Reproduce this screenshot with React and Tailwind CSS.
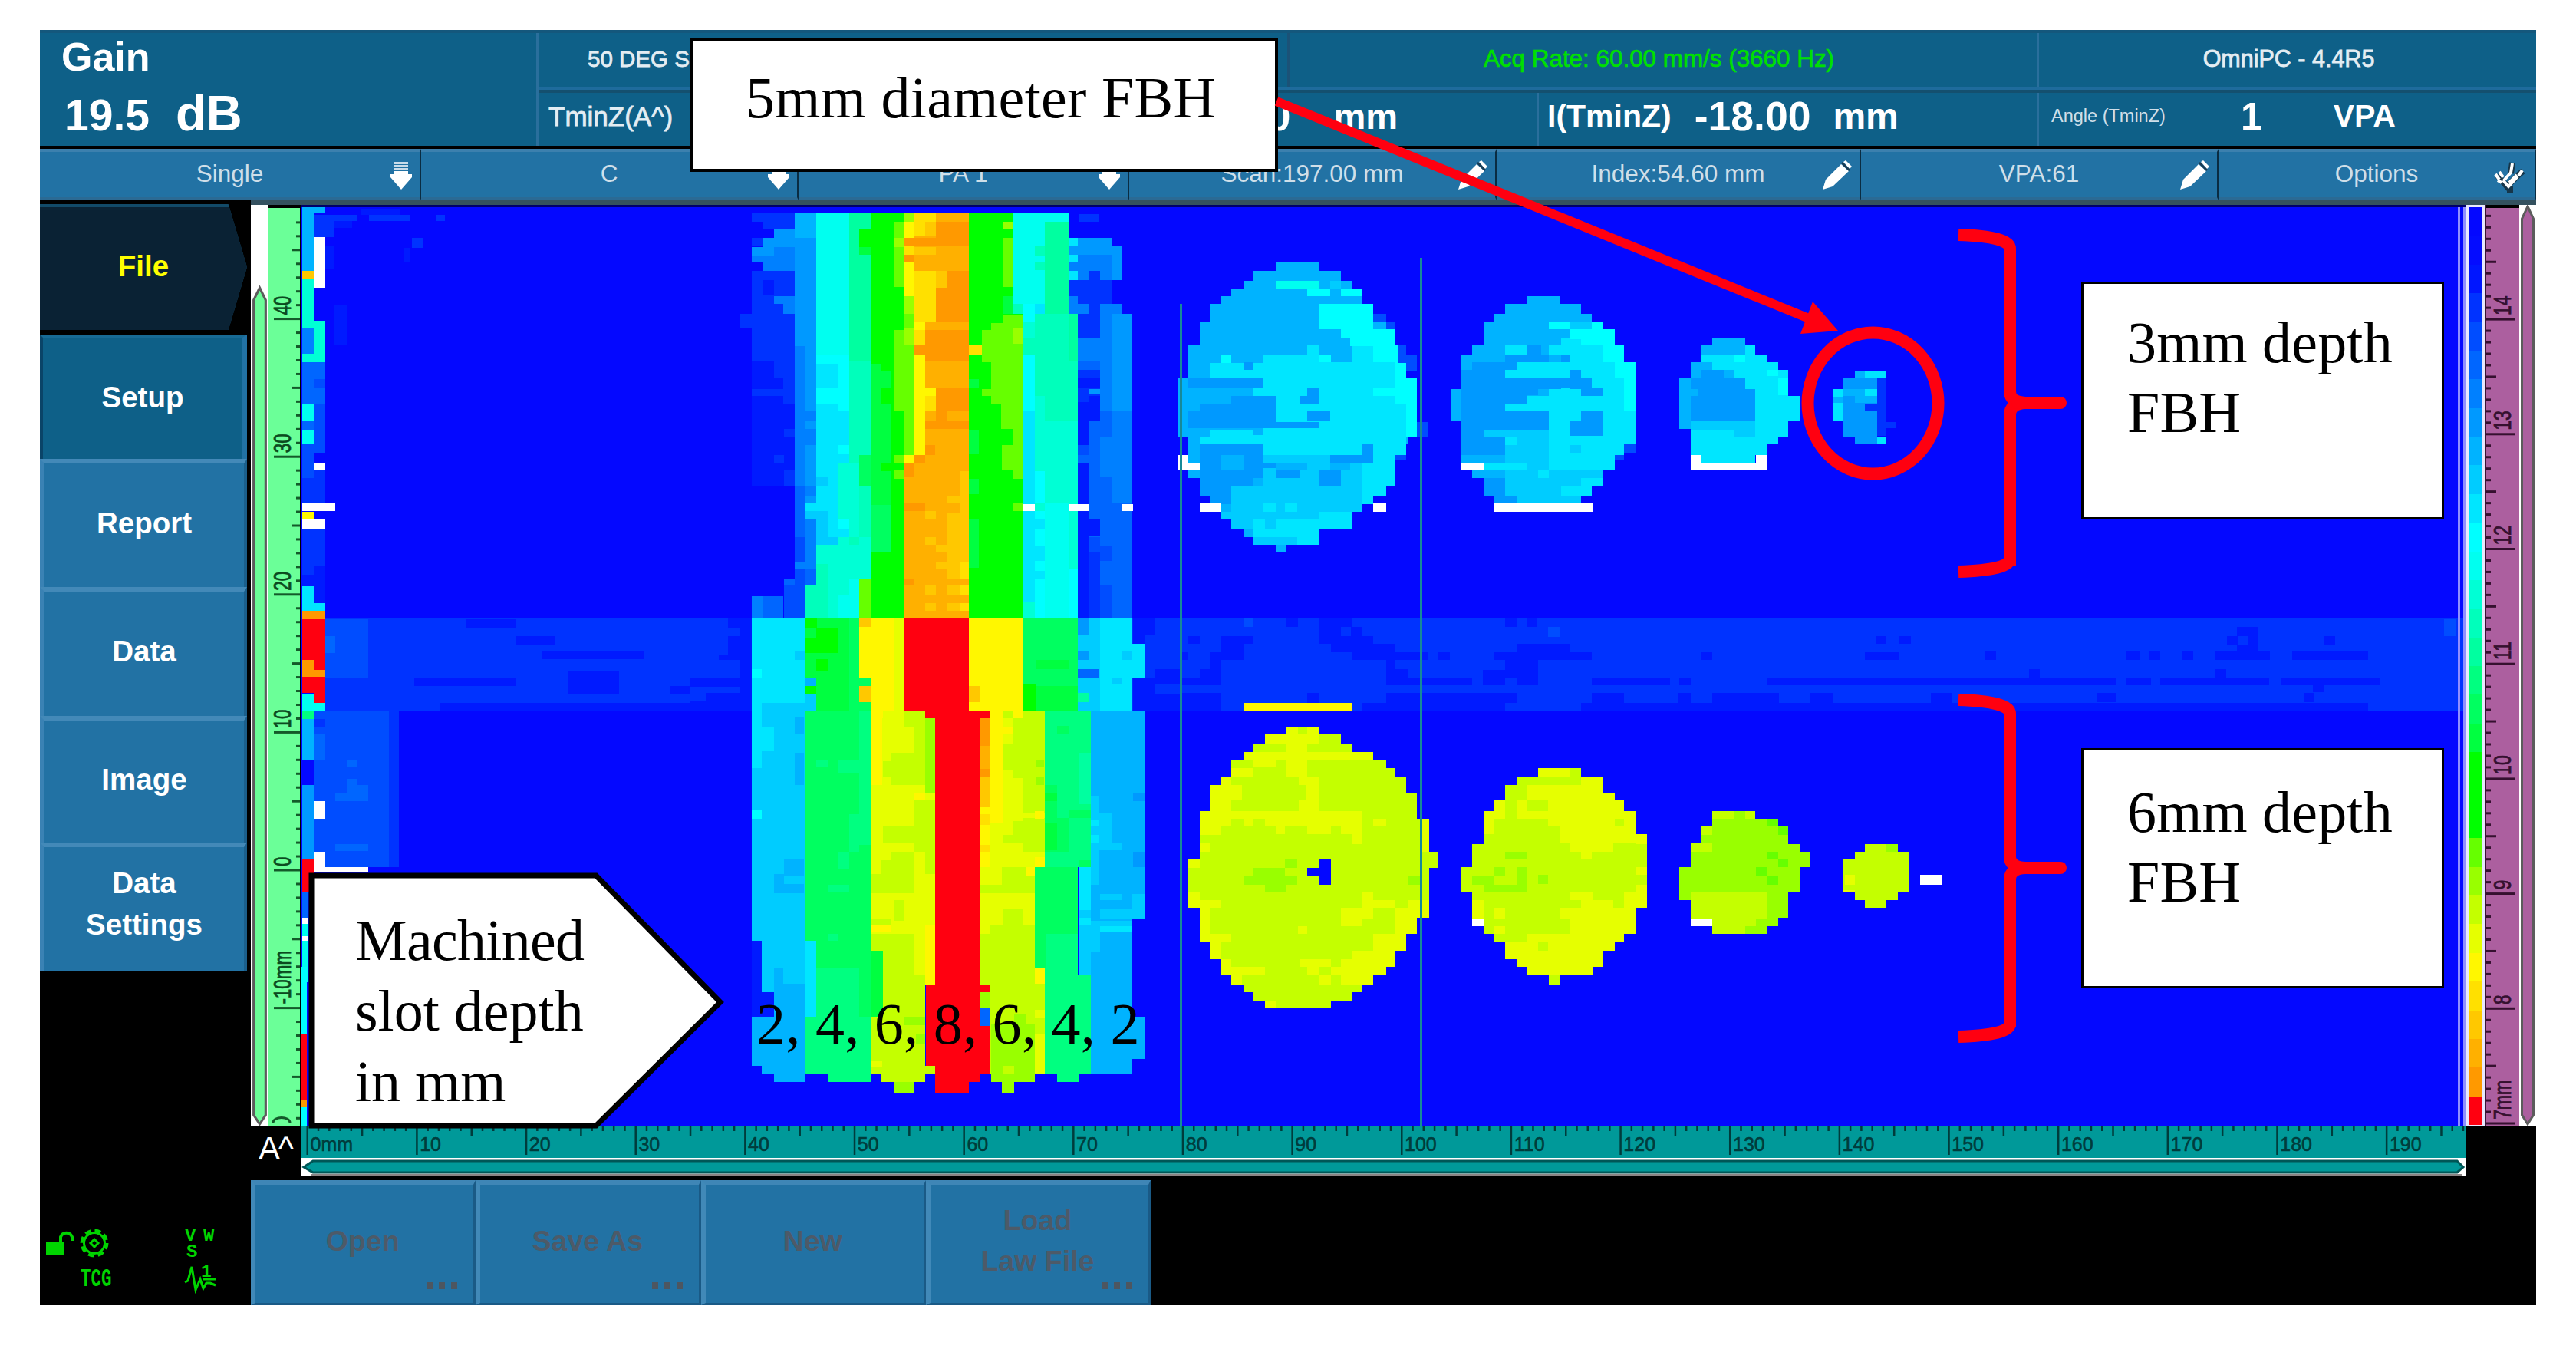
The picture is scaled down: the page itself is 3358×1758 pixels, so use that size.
import clsx from 'clsx';

// depth palette, deepest (top of the colour bar) to shallowest
const PALETTE = [
  '#0408ff', '#040cff', '#0016ff', '#0033ff', '#004dff', '#0066ff', '#0080ff', '#0099ff',
  '#00b3ff', '#00ccff', '#00e6ff', '#00ffff', '#00fff0', '#00ffd5', '#00ffbb', '#00ffa0',
  '#00ff80', '#00ff60', '#00ff40', '#00ff00', '#00ff00', '#00ff00', '#66ff00', '#99ff00',
  '#c4ff00', '#e6ff00', '#fff700', '#ffe000', '#ffc800', '#ffb000', '#ff9900', '#ff0010',
];

const C = {
  B: '#0408ff', b: '#001aff', a: '#0033ff', c: '#004dff', d: '#0066ff', e: '#0080ff',
  f: '#0099ff', g: '#00b3ff', h: '#00ccff', i: '#00e6ff', j: '#00ffff', k: '#00fff0',
  l: '#00ffd5', m: '#00ffbb', n: '#00ffa0', o: '#00ff80', p: '#00ff60', q: '#00ff40',
  r: '#00ff00', s: '#66ff00', t: '#99ff00', u: '#c4ff00', v: '#e6ff00', w: '#fff700',
  x: '#ffe000', y: '#ffc800', z: '#ffb000', A: '#ff9900', R: '#ff0010', W: '#ffffff',
};

// "x0 y0 x1 y1, ..." -> path of rectangles
const rects = (s) =>
  s
    .split(',')
    .map((r) => {
      const [x0, y0, x1, y1] = r.trim().split(' ');
      return `M${x0} ${y0}H${x1}V${y1}H${x0}Z`;
    })
    .join('');

// "y x0 x1, ..., yEnd" -> one rectangle for every scan row
const rows = (s) => {
  const list = s.split(',').map((r) => r.trim().split(' ').map(Number));
  return list
    .slice(0, -1)
    .map(([y, x0, x1], i) => `M${x0} ${y}H${x1}V${list[i + 1][0]}H${x0}Z`)
    .join('');
};

const SLOTS_TOP = [
  ['a', '197 48 333 75, 230 75 333 103, 197 130 230 160, 197 242 333 550, 160 390 197 440'],
  ['b', '197 550 333 975, 230 275 266 325'],
  ['a', '266 550 333 610, 297 610 333 695, 197 645 333 668, 300 780 333 810, 266 870 300 895, 300 920 333 975'],
  ['g', '333 48 401 130'],
  ['f', '266 103 333 130, 230 130 333 162, 197 162 266 190, 333 130 401 975'],
  ['e', '266 162 333 242, 197 190 266 214, 230 214 333 242, 266 328 333 355, 297 355 333 390, 333 500 365 975, 365 720 401 755, 365 780 401 835, 365 975 401 1315'],
  ['d', '333 975 365 1150'],
  ['f', '365 1010 401 1035'],
  ['c', '333 1150 365 1315, 300 1315 365 1427'],
  ['e', '333 1235 365 1260, 197 1350 230 1427'],
  ['d', '300 1290 333 1315, 230 1350 297 1427, 365 1260 401 1315'],
  ['l', '401 720 508 1427'],
  ['k', '401 48 508 530'],
  ['j', '401 530 508 720'],
  ['i', '401 560 470 640, 401 695 470 1175, 401 720 508 895, 440 1090 508 1150, 365 1035 401 1060'],
  ['h', '401 947 440 975, 365 1060 440 1087, 401 1060 440 1175, 440 1150 470 1175'],
  ['j', '470 835 508 865, 470 1087 508 1120'],
  ['n', '508 48 575 550'],
  ['m', '508 550 575 1285'],
  ['l', '470 895 508 1035, 508 900 540 1150, 401 1175 575 1290, 401 1175 540 1427, 540 1150 575 1285'],
  ['m', '401 1240 440 1427, 365 1315 440 1427'],
  ['k', '508 1290 540 1427, 470 1345 540 1427'],
  ['r', '575 48 683 1427, 540 103 575 162'],
  ['q', '540 162 575 187, 575 560 610 1200, 610 585 642 1200'],
  ['p', '540 870 575 975, 575 1040 642 1200'],
  ['r', '610 640 642 695, 610 895 650 925'],
  ['s', '648 75 683 297, 648 445 683 720, 683 390 712 870, 540 1290 575 1427, 652 870 683 895, 652 920 683 950'],
  ['t', '648 130 683 162, 683 440 712 497, 683 330 712 390'],
  ['z', '683 48 712 75, 712 48 889 415, 712 415 889 895, 683 895 889 1427'],
  ['t', '683 48 712 75'],
  ['A', '785 75 889 130, 683 130 889 160, 683 187 712 214, 820 242 889 300, 785 300 889 415'],
  ['x', '712 48 785 75, 712 75 750 125, 683 160 712 187, 712 242 785 415, 712 445 750 497'],
  ['y', '750 75 785 125, 712 162 785 187, 785 242 820 300'],
  ['w', '683 75 712 130, 683 214 712 330, 712 415 750 445, 712 527 750 870, 750 642 785 670, 683 870 712 895'],
  ['A', '750 445 889 550, 712 497 750 527, 785 642 889 720, 785 720 820 755, 750 755 889 780, 750 835 782 870, 712 870 750 895, 683 895 712 947, 683 1035 750 1060, 683 1290 712 1315'],
  ['x', '750 670 785 720'],
  ['y', '860 925 889 1427, 820 1010 860 1035, 750 1060 785 1087, 820 1065 889 1290, 750 1150 785 1175, 785 1175 820 1200, 785 1235 820 1260, 750 1315 785 1345, 820 1315 889 1345, 750 1375 785 1400, 820 1375 889 1400'],
  ['x', '860 1235 889 1290, 860 1315 889 1345, 860 1375 889 1400'],
  ['z', '820 1290 889 1315, 820 1345 889 1375, 860 1400 889 1427'],
  ['r', '889 48 1063 1427'],
  ['k', '1030 48 1133 355, 1133 48 1207 75'],
  ['l', '1063 390 1238 1427'],
  ['t', '1000 75 1030 100'],
  ['s', '1000 130 1030 297, 1000 395 1063 425, 960 420 1063 695, 932 445 960 555, 932 645 960 670, 992 695 1063 780, 1030 780 1063 835, 995 835 1063 920, 1030 920 1063 950, 1030 1035 1063 1060'],
  ['t', '1030 440 1060 490'],
  ['q', '1000 330 1030 390, 889 612 922 640, 889 785 922 865, 889 950 922 1003, 889 1090 922 1255'],
  ['x', '889 497 930 527'],
  ['n', '1133 75 1207 390, 1207 390 1238 550'],
  ['m', '1100 160 1133 190, 1100 214 1133 240, 1030 355 1063 390, 1100 390 1207 670, 1063 470 1100 530, 1133 670 1207 755, 1207 550 1238 755'],
  ['j', '1063 355 1133 390, 1063 390 1100 415, 1063 530 1100 720, 1100 925 1133 1035, 1100 1060 1207 1427, 1207 1260 1238 1427'],
  ['i', '1063 720 1100 1370, 1100 355 1133 390, 1100 1090 1133 1120, 1100 1180 1133 1230, 1100 1265 1133 1290'],
  ['k', '1133 1035 1207 1427'],
  ['e', '1238 160 1377 242, 1207 214 1238 242, 1238 242 1275 275, 1308 242 1345 275'],
  ['f', '1238 130 1345 187, 1345 160 1377 275, 1207 160 1238 187'],
  ['i', '1207 130 1238 160, 1207 187 1238 214, 1207 242 1238 275'],
  ['a', '1275 242 1308 275, 1207 275 1345 355, 1275 325 1308 390, 1238 390 1308 470, 1242 50 1305 75, 1238 580 1308 755'],
  ['e', '1207 330 1238 390, 1238 355 1275 390, 1308 355 1345 500, 1345 355 1377 390, 1238 470 1308 550, 1308 500 1345 720, 1345 720 1412 1035'],
  ['f', '1345 390 1412 720, 1275 645 1308 665'],
  ['d', '1238 550 1308 580, 1308 720 1345 755, 1275 755 1345 1150, 1238 870 1275 895, 1308 1035 1412 1427'],
  ['e', '1308 810 1345 945'],
  ['b', '1275 605 1308 640, 1238 610 1275 640, 1275 670 1308 755, 1238 690 1275 755, 1238 755 1275 835, 1238 895 1275 1427, 1275 1090 1308 1145'],
  ['c', '1238 835 1275 870, 1275 1150 1308 1427, 1308 1180 1345 1230, 1308 1315 1345 1427'],
  ['a', '1275 1200 1308 1427'],
  ['W', '1063 1037 1100 1060, 1210 1037 1275 1060, 1377 1037 1414 1060'],
];

const SLOTS_BOTTOM = [
  ['b', '0 58 197 328, 1414 58 1568 328'],
  ['a', '0 58 120 165, 120 87 157 110, 0 165 90 180, 90 180 157 230, 0 180 90 230, 0 258 157 275, 0 275 48 300, 1484 58 1568 205, 1450 105 1484 230, 1484 252 1568 278'],
  ['i', '197 58 365 328'],
  ['j', '197 205 228 230'],
  ['h', '333 155 365 180, 365 278 401 328'],
  ['q', '401 58 508 328, 365 87 401 232'],
  ['r', '365 58 405 87, 401 85 473 160, 365 115 473 160, 401 178 441 212, 365 255 401 278'],
  ['g', '365 232 401 255'],
  ['p', '508 58 540 328'],
  ['w', '540 58 683 303, 577 303 683 328, 889 58 1063 350'],
  ['v', '650 58 683 328'],
  ['y', '540 58 577 82, 540 255 577 303, 889 255 925 303'],
  ['p', '540 230 577 255, 540 303 577 328, 1063 58 1238 328'],
  ['R', '683 58 889 328'],
  ['r', '1063 252 1103 328'],
  ['q', '1103 180 1207 205, 1103 255 1238 328'],
  ['h', '1238 58 1308 328'],
  ['i', '1308 58 1412 328, 1412 133 1450 230'],
  ['f', '1238 58 1275 105, 1238 155 1275 180'],
  ['d', '1238 207 1305 232'],
  ['n', '1238 275 1275 303'],
  ['h', '1377 155 1412 180, 1345 232 1377 252, 197 328 365 1000, 228 1000 365 1150'],
  ['i', '197 305 228 495, 228 375 266 445'],
  ['h', '228 305 365 375'],
  ['g', '333 345 363 395, 333 450 363 545, 300 762 363 805, 266 805 363 860, 266 1080 297 1150, 297 1125 365 1220, 266 1150 365 1220, 197 1220 365 1365, 228 1365 365 1390, 266 1390 365 1412'],
  ['h', '300 810 363 833'],
  ['j', '197 618 228 643'],
  ['b', '197 1000 228 1220, 228 1150 266 1220'],
  ['p', '365 328 578 1100'],
  ['i', '365 1000 401 1220'],
  ['o', '540 328 578 720, 470 470 540 510, 508 630 540 740, 470 740 508 790, 401 470 441 492, 441 835 508 857, 441 978 470 1000, 401 1080 540 1390, 365 1220 578 1390, 441 1390 578 1412'],
  ['p', '540 1080 578 1220'],
  ['v', '578 328 782 1028'],
  ['w', '578 305 615 350'],
  ['u', '683 330 750 375, 642 450 750 545, 615 475 750 520, 713 375 750 450, 750 350 782 540, 713 590 782 740, 615 665 782 715, 642 740 713 860, 750 740 782 805, 610 765 713 825, 578 805 642 860, 650 880 683 940, 578 935 642 955, 610 1028 750 1412, 578 980 713 1028, 578 1220 750 1390, 750 1365 782 1390'],
  ['t', '750 350 782 570, 683 1220 750 1245, 720 1270 750 1300, 648 1412 713 1442'],
  ['q', '578 1028 615 1220'],
  ['v', '713 955 750 1100, 578 1350 612 1368'],
  ['w', '750 805 782 1127, 713 570 750 590, 578 328 612 545, 578 955 642 975'],
  ['v', '750 805 782 955'],
  ['R', '782 328 927 1412, 750 328 957 350, 752 1127 957 1150, 752 1150 927 1365, 927 1247 957 1390, 782 1412 889 1442'],
  ['v', '957 350 1133 785, 927 660 957 785, 927 785 1100 980'],
  ['w', '957 328 1000 655, 1000 375 1030 395, 927 522 957 740, 927 740 957 785'],
  ['u', '1000 328 1030 350, 1063 328 1133 575, 1030 350 1133 525, 1000 425 1063 500, 1063 575 1133 625, 1063 640 1133 740, 1000 690 1133 715, 1030 650 1065 690, 995 785 1100 860, 1000 905 1063 960, 957 955 1100 980, 927 980 1100 1127, 957 1078 1133 1390, 927 835 1000 860'],
  ['A', '927 350 957 430, 927 497 957 522'],
  ['z', '927 430 957 497'],
  ['y', '927 522 957 610'],
  ['x', '927 630 957 660, 927 720 957 740'],
  ['w', '1100 620 1130 642, 1100 755 1133 785, 1100 1078 1133 1125, 1070 785 1100 810'],
  ['t', '1103 470 1130 492, 1103 522 1130 545, 960 1240 1100 1390, 960 1390 1100 1412, 1035 1215 1070 1240, 995 1412 1035 1442, 927 1150 957 1195'],
  ['v', '1100 1200 1133 1225, 1100 1270 1133 1390'],
  ['u', '1000 1365 1035 1390'],
  ['d', '927 1195 957 1247'],
  ['o', '1133 328 1278 785, 1133 980 1238 1390, 1238 1100 1278 1390, 1170 1390 1240 1412'],
  ['n', '1240 450 1278 600'],
  ['p', '1170 372 1207 395, 1133 545 1170 740, 1133 640 1207 740, 1207 618 1278 640, 1100 785 1238 980, 1240 765 1278 785, 1100 980 1135 1078'],
  ['q', '1133 567 1170 592, 1133 655 1170 735'],
  ['i', '1240 785 1278 960'],
  ['g', '1278 328 1450 935, 1278 930 1412 1390, 1278 1220 1450 1345'],
  ['h', '1240 910 1278 1100, 1278 575 1305 700, 1305 625 1345 735, 1278 685 1305 810, 1305 715 1377 735, 1278 785 1305 835, 1308 862 1377 880, 1308 905 1450 935, 1412 862 1450 935, 1278 940 1412 975, 1278 975 1308 1030'],
  ['i', '1278 645 1305 665, 1278 690 1305 712, 1240 932 1278 955, 1308 957 1412 975'],
  ['f', '1414 740 1450 785, 1414 567 1450 592'],
];

const BAND_MID = [
  ['b', '252 107 274 140, 313 107 375 208, 353 140 392 208, 375 178 414 208, 335 208 455 240, 375 240 515 270, 0 140 8 180, 69 178 91 208, 131 178 190 208, 131 208 172 240, 110 240 172 270, 0 240 69 270, 0 270 8 370, 0 307 30 370, 30 338 110 370, 91 307 131 370, 110 270 131 370, 437 270 455 340, 437 307 478 370, 437 340 597 370, 0 370 8 398, 535 240 556 270, 637 240 820 270, 680 208 778 240, 658 270 720 310, 617 310 720 340, 617 340 658 370, 680 340 720 370, 658 107 680 140, 698 107 718 140, 820 340 965 370, 982 340 1004 370, 1145 340 1568 370, 1022 240 1043 270, 1327 240 1390 270, 1348 178 1367 208, 1390 178 1412 208, 1553 240 1568 270, 0 398 131 467, 291 398 313 437, 392 437 658 467, 437 398 680 437, 820 398 880 437, 800 437 1568 467, 980 398 1004 437, 1043 398 1168 437, 1225 398 1268 437, 1450 398 1490 437'],
  ['a', '353 140 372 178'],
  ['c', '172 107 190 140, 738 140 760 180'],
  ['w', '172 437 375 470'],
];

const BAND_RIGHT = [
  ['b', '0 1527 440 1550, 467 1527 530 1550, 555 1527 840 1550, 872 1527 1130 1550, 467 1443 500 1470, 527 1443 555 1470, 612 1443 642 1470, 700 1443 843 1470, 900 1443 1100 1470, 755 1365 810 1443, 730 1393 755 1420, 985 1393 1013 1420, 212 1500 240 1527, 700 1500 728 1527, 97 1443 125 1470, 955 1550 985 1572, 387 1574 440 1605, 930 1574 957 1605, 0 1607 1100 1632'],
  ['a', '757 1395 783 1420'],
  ['c', '1298 1340 1330 1393'],
];

const EDGE_TOP = [
  ['a', '643 750 740 775, 643 775 690 838, 768 750 862 775, 920 750 940 775, 865 840 890 880'],
  ['b', '690 775 730 800, 669 870 690 960, 690 1100 718 1260, 750 725 840 750, 848 880 862 935'],
  ['g', '617 717 643 968, 643 717 669 745'],
  ['W', '643 838 669 1035'],
  ['y', '617 968 643 1003'],
  ['l', '617 1003 643 1200, 643 1165 669 1262'],
  ['e', '617 1200 643 1262'],
];

const EDGE_LOW = [
  ['a', '1152 705 3600 925'],
  ['c', '1152 705 1320 845, 1107 925 1320 1295, 1320 925 1400 1295'],
  ['b', '1700 705 1900 725, 2000 780 2400 800, 1900 745 2050 765, 2100 830 2300 885, 2600 760 2700 800, 1500 845 1900 865, 2500 865 3500 885, 1600 905 2700 925, 2750 740 2850 790'],
  ['a', '1160 845 1235 925, 1235 880 1400 905, 1400 925 1440 1295, 1107 942 1152 960'],
  ['d', '1152 745 1190 785, 1235 1040 1275 1058, 1235 1085 1275 1120, 1275 1100 1320 1120, 1190 1120 1320 1137, 1190 1240 1320 1257'],
  ['l', '1062 0 1152 95'],
  ['e', '1062 15 1107 75'],
  ['d', '1062 95 1152 195, 1062 195 1107 330'],
  ['c', '1107 135 1152 155, 1107 195 1152 310, 1062 290 1107 370'],
  ['k', '1062 195 1107 235, 1062 255 1107 290'],
  ['a', '1107 350 1152 430, 1062 370 1107 430, 1062 490 1107 600, 1107 490 1152 580'],
  ['b', '1107 580 1152 668, 1062 600 1107 627'],
  ['W', '1107 333 1152 350, 1062 430 1192 448, 1062 468 1152 490'],
  ['w', '1062 450 1107 468'],
  ['i', '1062 627 1107 685, 1107 668 1152 685'],
  ['A', '1062 685 1152 705'],
  ['R', '1062 705 1152 880, 1107 880 1152 905'],
  ['A', '1062 803 1107 843, 1107 825 1152 843'],
  ['k', '1062 882 1107 922, 1107 905 1152 922'],
  ['o', '1062 922 1107 942'],
  ['g', '1062 942 1107 1040'],
  ['B', '1062 1040 1107 1100'],
  ['f', '1062 1100 1107 1275'],
  ['d', '1107 978 1152 1040'],
  ['W', '1107 1137 1152 1180, 1107 1258 1152 1300, 1107 1295 1320 1307'],
  ['R', '1062 1275 1107 1355'],
  ['d', '1062 1355 1085 1415'],
  ['W', '1062 1415 1085 1430, 1062 1458 1085 1470'],
  ['k', '1062 1430 1085 1458, 1062 1470 1085 1568'],
];

const EDGE_BOTTOM = [
  ['j', '615 0 628 262'],
  ['R', '615 262 628 520'],
  ['A', '615 520 628 550'],
  ['j', '615 550 628 620'],
];

const HOLES_3MM = [
  {
    fill: 'g',
    shape:
      '247 233 313, 278 190 353, 317 172 373, 347 150 392, 378 131 392, 408 110 414, 478 91 437, 508 91 455, 570 69 459, 637 69 475, 700 50 495, 928 69 478, 958 69 475, 998 69 455, 1088 91 455, 1120 91 437, 1157 110 414, 1190 131 392, 1220 131 375, 1250 150 375, 1288 172 313, 1320 190 313, 1350 233 252, 1380',
    cells: [
      ['i', '210 607 455 1000, 110 640 210 700, 370 540 455 640, 455 637 475 1000, 475 700 495 928, 291 570 313 607, 190 738 233 768, 110 900 210 958, 91 928 110 958, 392 1000 455 1120, 392 1120 437 1157, 375 1157 414 1190'],
      ['g', '353 570 373 635, 335 607 373 637'],
      ['j', '313 408 414 508, 353 508 455 540, 370 540 455 572, 414 570 459 637, 455 637 475 800, 414 738 478 768, 475 700 495 928, 353 347 392 378, 291 347 333 378, 131 607 150 640, 313 607 335 637'],
      ['k', '233 317 313 347'],
      ['h', '333 317 353 347, 210 1000 333 1120, 210 1000 392 1120, 150 1120 392 1220, 131 1220 375 1250, 150 1250 210 1288, 172 640 190 665'],
      ['f', '69 700 210 738, 150 768 233 800, 91 800 233 828, 60 828 233 895, 110 870 313 895, 276 768 313 798, 291 738 313 768, 291 828 333 865, 172 637 190 665, 91 958 210 1090, 91 1060 190 1120, 110 1120 150 1190, 91 1088 150 1157, 333 1000 414 1030, 392 958 414 1000, 233 1060 276 1090, 313 1060 353 1120, 210 1030 233 1050'],
      ['g', '50 700 69 928, 131 1000 172 1060, 333 1030 370 1060, 69 1000 91 1090, 233 1030 291 1060, 190 900 210 920'],
      ['i', '190 1250 375 1288, 190 1288 313 1350, 313 1220 375 1288, 210 1187 233 1220, 250 1187 272 1220'],
      ['h', '190 1320 272 1350, 212 1250 233 1288'],
      ['c', '414 447 437 478, 437 478 455 508, 459 570 475 640, 475 607 495 668, 495 870 515 930, 455 998 475 1020'],
      ['W', '50 998 69 1058, 50 1030 91 1058, 91 1187 131 1220, 414 1187 437 1220'],
    ],
  },
  {
    fill: 'g',
    shape:
      '378 698 760, 408 658 800, 447 637 820, 478 620 840, 508 620 862, 570 597 880, 607 578 880, 637 578 902, 740 557 902, 865 578 902, 958 578 880, 998 578 862, 1030 597 862, 1060 597 840, 1088 620 840, 1120 620 820, 1157 637 800, 1190',
    cells: [
      ['i', '740 637 902 958, 778 508 862 607, 762 540 800 607, 740 570 862 607, 778 607 880 637, 658 570 698 607, 620 930 880 1000, 658 1000 862 1060, 800 1060 840 1120'],
      ['j', '740 478 778 508, 820 478 840 508, 778 508 862 545, 800 545 862 570, 840 570 880 637, 862 637 902 700, 880 700 902 828'],
      ['h', '778 478 820 508, 620 900 740 930, 658 960 740 1060, 658 1060 840 1090, 658 1090 800 1157, 680 1157 800 1190, 778 960 800 990'],
      ['f', '698 570 725 607, 658 607 740 637, 597 637 680 700, 578 665 658 700, 578 700 820 740, 578 740 658 1000, 658 740 720 765, 658 765 698 800, 800 738 840 768, 780 665 800 700, 600 865 740 900, 620 828 740 895, 778 865 840 925, 800 828 840 865, 762 607 778 637, 578 1000 620 1015, 620 1088 658 1157, 637 1157 680 1190'],
      ['i', '680 637 800 665, 658 665 780 700, 698 768 800 800, 658 798 840 828, 762 738 778 768, 740 828 778 960, 620 1030 700 1060, 762 1120 820 1157, 720 1060 740 1088'],
      ['h', '620 900 658 930, 680 900 740 960, 640 930 680 930'],
      ['g', '578 1000 620 1030, 557 740 578 865, 720 740 740 760'],
      ['c', '880 958 902 990, 862 998 880 1020'],
      ['W', '578 1030 620 1058, 637 1187 822 1220'],
    ],
  },
  {
    fill: 'i',
    shape:
      '540 1043 1105, 570 1022 1123, 607 1022 1145, 637 1004 1166, 665 1004 1185, 700 982 1185, 768 982 1206, 865 982 1185, 898 1004 1185, 928 1004 1166, 958 1004 1145, 1000 1022 1123, 1030',
    cells: [
      ['g', '1043 540 1105 570, 1022 570 1105 607, 982 700 1004 898, 1004 637 1043 700'],
      ['f', '1004 700 1105 865, 1105 740 1123 865, 1022 665 1065 700'],
      ['g', '1065 665 1085 700, 1004 740 1018 768'],
      ['h', '1004 865 1123 900, 1085 900 1123 928'],
      ['j', '1085 607 1105 637, 1145 665 1166 690, 1166 700 1185 765'],
      ['W', '1004 1000 1022 1058, 1004 1030 1145 1058, 1125 1000 1145 1058'],
    ],
  },
  {
    fill: 'f',
    shape: '668 1308 1350, 700 1287 1350, 928 1308 1350, 958',
    cells: [
      ['i', '1327 668 1367 700, 1269 740 1287 865, 1327 740 1350 768, 1350 928 1367 958'],
      ['g', '1308 668 1327 700, 1287 740 1327 768, 1308 768 1350 795, 1269 770 1287 795'],
      ['a', '1350 700 1367 925, 1327 798 1350 828, 1367 870 1385 895'],
    ],
  },
];

const HOLES_6MM = [
  {
    fill: 'u',
    shape:
      '200 252 313, 232 212 353, 270 190 373, 300 172 414, 330 150 437, 362 150 455, 398 131 475, 430 110 475, 460 110 495, 530 91 495, 560 91 517, 690 91 535, 720 69 535, 752 69 517, 910 91 517, 947 91 495, 1010 91 475, 1040 110 475, 1078 110 455, 1110 131 455, 1140 131 437, 1170 150 414, 1210 172 392, 1240 190 373, 1272 212 335, 1302',
    cells: [
      ['v', '212 232 313 270, 252 200 291 398, 291 200 313 232, 172 300 414 330, 190 330 233 360, 150 362 190 398, 131 398 150 430, 110 430 170 490, 110 490 150 530, 275 398 313 430, 290 430 313 530, 275 490 313 530, 91 530 392 560, 91 560 150 590, 91 590 131 625, 172 560 190 590, 212 560 392 590, 233 590 250 620, 291 590 335 620, 353 590 392 620, 373 620 392 660, 414 560 437 590, 91 655 110 690, 69 720 91 752, 69 850 91 910, 91 880 131 910, 91 910 110 1040, 110 1010 150 1040, 110 1040 131 1110, 131 1110 150 1170, 150 1140 212 1170, 150 1170 170 1210, 353 910 414 950, 353 950 392 980, 392 850 414 910, 414 880 455 910, 455 910 495 1010, 478 880 517 947, 414 1010 475 1078, 373 1078 455 1110, 353 1110 455 1140, 335 1140 437 1170, 353 1170 414 1210, 276 1110 335 1140, 291 1140 313 1170, 313 1170 335 1210, 212 1272 233 1302, 500 560 517 690, 274 980 291 1010'],
      ['u', '274 205 291 232, 313 240 335 270'],
      ['t', '190 752 250 785, 172 785 272 820, 212 820 252 850, 250 720 272 752, 478 785 500 820'],
      ['B', '313 720 335 820, 291 752 313 782'],
    ],
  },
  {
    fill: 'u',
    shape:
      '362 720 800, 398 680 840, 430 658 840, 460 658 862, 490 637 880, 530 620 902, 622 620 922, 660 597 922, 750 578 922, 850 597 922, 910 597 902, 980 620 902, 1010 637 880, 1040 658 862, 1078 658 840, 1110 680 840, 1140 698 822, 1170 740 760, 1210',
    cells: [
      ['v', '720 362 780 398, 800 398 840 430, 698 430 840 460, 698 460 862 490, 738 490 880 530, 738 530 902 590, 760 590 902 655, 780 655 860 690, 800 690 820 720, 637 490 658 530, 620 530 658 560, 620 560 637 622, 680 490 698 560, 698 530 738 560, 902 622 922 660, 902 750 922 780, 902 820 922 910, 880 850 922 910, 780 850 822 880, 800 880 860 920, 760 910 902 950, 780 950 902 1010, 698 1010 880 1040, 658 1040 862 1078, 658 1078 840 1110, 680 1110 840 1140, 698 1140 822 1170, 597 880 620 950, 637 910 658 950, 637 980 658 1010'],
      ['u', '720 1040 738 1078, 862 560 880 590, 720 490 738 520'],
      ['t', '658 690 698 720, 637 750 658 785, 620 785 637 850, 597 785 620 820, 637 820 698 850, 680 750 698 850, 720 780 738 815'],
      ['W', '597 950 620 980'],
    ],
  },
  {
    fill: 't',
    shape:
      '530 1043 1123, 560 1043 1166, 590 1022 1185, 660 1004 1206, 690 1004 1225, 750 982 1206, 850 982 1185, 880 1004 1185, 947 1004 1166, 980 1043 1145, 1010',
    cells: [
      ['u', '1043 530 1085 560, 1105 530 1123 560, 1022 590 1043 625, 1004 655 1043 690, 1004 850 1145 950, 1043 950 1125 980, 1043 980 1105 1010'],
      ['s', '1145 560 1166 590, 1166 590 1185 625, 1145 690 1166 720, 1166 720 1185 750, 1125 750 1145 782, 1145 782 1166 820'],
      ['W', '1004 950 1043 980'],
    ],
  },
  {
    fill: 'u',
    shape: '660 1327 1388, 690 1308 1410, 720 1287 1410, 850 1308 1388, 880 1327 1366, 910',
    cells: [
      ['t', '1367 660 1388 690'],
      ['v', '1290 780 1308 820, 1287 840 1308 850'],
      ['W', '1430 780 1470 820'],
    ],
  },
];

function Cells({ data }) {
  return data.map(([c, s], i) => <path key={i} fill={C[c]} d={rects(s)} />);
}

function Holes({ list }) {
  return list.map((hole, i) => (
    <g key={i}>
      <path fill={C[hole.fill]} d={rows(hole.shape)} />
      <Cells data={hole.cells} />
    </g>
  ));
}

function CScan() {
  return (
    <svg viewBox="393 267 2822 1201" className="block h-[1201px] w-[2822px]" shapeRendering="crispEdges">
      <rect x="393" y="267" width="2822" height="1201" fill={C.B} />
      <rect x="424" y="806" width="2787" height="120" fill={C.a} />
      <g transform="translate(40 30) scale(0.574 0.3333)"><Cells data={EDGE_TOP} /></g>
      <g transform="translate(40 420) scale(0.3333 0.5485)"><Cells data={EDGE_LOW} /></g>
      <g transform="translate(40 1260) scale(0.574 0.3333)"><Cells data={EDGE_BOTTOM} /></g>
      <g transform="translate(1500 770) scale(0.7015 0.3333)"><Cells data={BAND_MID} /></g>
      <g transform="translate(2540 260) scale(0.4975 0.4082)"><Cells data={BAND_RIGHT} /></g>
      <g transform="translate(900 260) scale(0.4082 0.3827)"><Cells data={SLOTS_TOP} /></g>
      <g transform="translate(900 780) scale(0.4082 0.4464)"><Cells data={SLOTS_BOTTOM} /></g>
      <g transform="translate(1500 260) scale(0.7015 0.3333)"><Holes list={HOLES_3MM} /></g>
      <g transform="translate(1500 880) scale(0.7015 0.3333)"><Holes list={HOLES_6MM} /></g>
      {/* cursors */}
      <path fill="#168a98" d="M1538 396h3V1468h-3zM1851 336h3V1468h-3z" />
      <path fill="#8f8fff" d="M3204 267h3V1468h-3zM3211 267h4V1468h-4z" />
      <path fill="#00006a" d="M393 267h2822v3H393z" />
    </svg>
  );
}

const ticks = (from, to, step) => {
  const out = [];
  for (let v = from; v <= to; v++) out.push({ v, p: v * step });
  return out;
};

function IndexRuler() {
  // 17.96px per mm, 0 at y = 1133.6
  return (
    <svg viewBox="350 267 43 1201" className="block h-[1201px] w-[43px]">
      <rect x="350" y="267" width="43" height="1201" fill="#6bff98" />
      <path fill="#000" d="M350 267h43v4h-43zM391 267h2v1201h-2z" />
      {ticks(-18, 47, 17.96).map(({ v, p }) => {
        const len = v % 10 === 0 ? 34 : v % 5 === 0 ? 11 : 5;
        return <rect key={v} x={391 - len} y={1132.5 - p} width={len} height="3" fill="#145a2a" />;
      })}
      {[[40, '40'], [30, '30'], [20, '20'], [10, '10'], [0, '0'], [-10, '-10mm']].map(([v, label]) => (
        <text
          key={v}
          transform={`translate(379 ${1129 - v * 17.96}) rotate(-90) scale(0.7 1)`}
          className="fill-[#0b4a1e] stroke-[#0b4a1e] stroke-[0.8px] font-['Liberation_Sans'] text-[32px]"
        >
          {label}
        </text>
      ))}
      <path d="M356 1463a10 6 0 0 1 22 0" fill="none" stroke="#145a2a" strokeWidth="3" />
    </svg>
  );
}

function ScanRuler() {
  return (
    <svg viewBox="393 1468 2819 65" className="block h-[65px] w-[2822px] shrink-0" preserveAspectRatio="none">
      <rect x="393" y="1468" width="2819" height="42" fill="#009999" />
      {ticks(0, 197, 14.25).map(({ v, p }) => {
        const len = v % 10 === 0 ? 37 : v % 5 === 0 ? 13 : 6;
        return <rect key={v} x={399.5 + p} y="1468" width="2.5" height={len} fill="#003c3c" />;
      })}
      {Array.from({ length: 20 }, (_, i) => (
        <text
          key={i}
          x={404.5 + i * 142.5}
          y="1500"
          className="fill-[#003c3c] stroke-[#003c3c] stroke-[0.6px] font-['Liberation_Sans'] text-[25px]"
        >
          {i === 0 ? '0mm' : i * 10}
        </text>
      ))}
      <rect x="393" y="1509" width="2819" height="24" fill="#fff" />
      <path fill="#8a8484" d="M406 1530h2800v3H406z" />
      <path fill="#009999" stroke="#005656" strokeWidth="3" d="M408 1513H3200L3208 1521L3200 1528H408L396 1521Z" />
    </svg>
  );
}

function DepthRuler() {
  return (
    <svg viewBox="3239 267 45 1201" className="block h-[1201px] w-[45px]">
      <rect x="3239" y="267" width="45" height="1201" fill="#ac5f9f" />
      <path fill="#000" d="M3239 267h45v4h-45z" />
      <path fill="#3a1535" d="M3239 267h2v1201h-2z" />
      {ticks(0, 79, 14.97).map(({ v, p }) => {
        const len = v % 10 === 0 ? 37 : v % 5 === 0 ? 13 : 6;
        return <rect key={v} x="3241" y={1462.5 - p} width={len} height="3" fill="#35102f" />;
      })}
      {['7mm', '8', '9', '10', '11', '12', '13', '14'].map((label, i) => (
        <text
          key={label}
          transform={`translate(3273 ${1459 - i * 149.7}) rotate(-90) scale(0.72 1)`}
          className="fill-[#35102f] stroke-[#35102f] stroke-[0.8px] font-['Liberation_Sans'] text-[32px]"
        >
          {label}
        </text>
      ))}
    </svg>
  );
}

function ColorBar() {
  return (
    <div className="flex h-[1201px] w-6 flex-col border-[3px] border-[#e8e8ff] border-b-2 bg-white">
      {PALETTE.map((color, i) => (
        <div key={i} className="w-full flex-1" style={{ backgroundColor: color }} />
      ))}
    </div>
  );
}

function VerticalThumb({ fill, top }) {
  return (
    <svg viewBox="0 0 22 1201" preserveAspectRatio="none" className="block h-[1201px] w-full bg-white">
      <path
        d={`M11 ${top}L18.5 ${top + 16}V1186L11 1198L3.5 1186V${top + 16}Z`}
        fill={fill}
        stroke="#5c5c5c"
        strokeWidth="3"
      />
    </svg>
  );
}

function DownArrow() {
  return (
    <svg viewBox="0 0 28 36" className="absolute top-[13px] right-[10px] h-9 w-7">
      <path fill="#c9dcea" d="M5 0h18v3H5zM5 4h18v3H5zM5 8h18v3H5z" />
      <path fill="#fff" d="M5 12h18v4h5v4L14 36 0 20v-4h5z" />
    </svg>
  );
}

function Pencil() {
  return (
    <svg viewBox="0 0 38 38" className="absolute top-[11px] right-[10px] size-[38px]">
      <path fill="#fff" d="M24 5l10 9L13 34 0 38 4 25z" />
      <path fill="#fff" d="M27 2l3-2 8 8-3 3z" />
      <path stroke="#1c3c52" strokeWidth="2.5" d="M25 3l10 10" />
    </svg>
  );
}

function Tools() {
  return (
    <svg viewBox="0 0 40 42" className="absolute top-[12px] right-[13px] h-[42px] w-10" fill="none">
      <path stroke="#16364a" strokeWidth="8" d="M4 18l13 15 15-15 6-5M24 2l-2 14M21 33v8" />
      <path stroke="#fff" strokeWidth="4" d="M2 17l5 7M7 14l5 7M5 25l5 3M24 3l-2 12M12 25l7 8L31 20M37 12l-5 7" />
      <path stroke="#fff" strokeWidth="4" d="M22 15l-9 10M20 28l10-10" />
    </svg>
  );
}

const toolbar = [
  { label: 'Single', icon: DownArrow, width: 'w-[497px]' },
  { label: 'C', icon: DownArrow, width: 'w-[492px]' },
  { label: 'PA 1', icon: DownArrow, width: 'w-[431px]' },
  { label: 'Scan:197.00 mm', icon: Pencil, width: 'w-[479px]' },
  { label: 'Index:54.60 mm', icon: Pencil, width: 'w-[475px]' },
  { label: 'VPA:61', icon: Pencil, width: 'w-[466px]' },
  { label: 'Options', icon: Tools, width: 'w-[414px]' },
];

function Header() {
  return (
    <div className="flex h-[151px] border-t-4 border-[#14577c] bg-[#0e6088] text-white">
      <div className="flex h-full w-[650px] flex-col border-r-[3px] border-[#2a6f9c] pl-7 font-bold">
        <span className="mt-[4px] text-[52px] leading-[54px]">Gain</span>
        <div className="mt-[15px] flex items-baseline gap-[34px] pl-1">
          <span className="text-[57px] leading-[64px]">19.5</span>
          <span className="text-[65px] leading-[64px]">dB</span>
        </div>
      </div>
      <div className="flex flex-1 flex-col">
        <div className="flex h-[74px] border-b-4 border-[#1e6b9c] text-[30.5px] leading-[67px] text-[#e3edf3]">
          <div className="w-[979px] border-r-[3px] border-[#1b5277] pl-[64px] text-[29.5px] [-webkit-text-stroke:0.8px_#e3edf3]">
            50 DEG S
          </div>
          <div className="w-[977px] border-r-[3px] border-[#2a6f9c] pr-[11px] text-center text-[31.4px] text-[#00e000] [-webkit-text-stroke:0.6px_#00e000]">
            Acq Rate: 60.00 mm/s (3660 Hz)
          </div>
          <div className="flex-1 pl-[3px] text-center [-webkit-text-stroke:0.8px_#e3edf3]">OmniPC - 4.4R5</div>
        </div>
        <div className="flex h-[73px] border-t-4 border-[#14506f] leading-none">
          <div className="flex w-[1304px] items-center border-r-[3px] border-[#2a6f9c] pb-[8px] pl-[13px]">
            <span className="text-[35px] text-[#e3edf3] [-webkit-text-stroke:0.8px_#e3edf3]">TminZ(A^)</span>
            <span className="ml-auto text-[52px] font-bold">0</span>
            <span className="mr-[181px] ml-[56px] text-[47px] font-bold">mm</span>
          </div>
          <div className="flex w-[652px] items-center border-r-[3px] border-[#2a6f9c] pb-[8px] pl-[11px] font-bold">
            <span className="text-[41px]">I(TminZ)</span>
            <span className="ml-[30px] text-[53.5px]">-18.00</span>
            <span className="ml-[29px] text-[48px]">mm</span>
          </div>
          <div className="flex flex-1 items-center pb-[8px] pl-[16px]">
            <span className="text-[23.5px] text-[#cfdfe9]">Angle (TminZ)</span>
            <span className="ml-[98px] text-[50px] font-bold">1</span>
            <span className="ml-[93px] text-[41px] font-bold">VPA</span>
          </div>
        </div>
      </div>
    </div>
  );
}

function Toolbar() {
  return (
    <div className="mt-[4px] flex h-[67px] bg-[#2272a4]">
      {toolbar.map(({ label, icon: Icon, width }) => (
        <div
          key={label}
          className={clsx(
            'relative flex items-center justify-center border-t-4 border-r-2 border-b-4 border-t-[#3c80ae] border-r-[#0a2c42] border-b-[#2b6a94] pb-[2px] text-[31.5px] text-[#cfdfe9]',
            width
          )}
        >
          {label}
          <Icon />
        </div>
      ))}
    </div>
  );
}

function Sidebar() {
  const item =
    'flex items-center justify-center border-t-6 border-l-6 border-r-4 border-t-[#4389b8] border-l-[#3a82b4] border-r-[#1b5f8c] bg-[#2272a4] pb-[6px] text-center';
  return (
    <div className="flex w-[275px] flex-col text-[38.5px] leading-[54px] font-bold text-white">
      <div className="mt-[5px] h-[164px] w-[270px] bg-[#124a68] [clip-path:polygon(0_0,91%_0,100%_50%,91%_100%,0_100%)]">
        <div className="mt-1 flex h-[160px] items-center justify-center bg-[#0a2234] pb-[6px] text-[#ffff00]">File</div>
      </div>
      <div className="mt-[6px] flex h-[162px] w-[270px] items-center justify-center border-t-4 border-r-6 border-l-4 border-t-[#186a94] border-r-[#2272a4] border-l-[#0a4468] bg-[#0e6088] pb-[3px]">
        Setup
      </div>
      <div className={clsx(item, 'h-[167px] w-[270px]')}>Report</div>
      <div className={clsx(item, 'h-[168px] w-[270px]')}>Data</div>
      <div className={clsx(item, 'h-[165px] w-[270px]')}>Image</div>
      <div className={clsx(item, 'h-[167px] w-[270px] pb-[14px]')}>
        Data
        <br />
        Settings
      </div>
      <StatusIcons />
    </div>
  );
}

function StatusIcons() {
  return (
    <svg viewBox="52 1590 275 111" className="mt-auto block h-[111px] w-[275px]">
      <g fill="none" stroke="#00d400" strokeWidth="4">
        <rect x="60" y="1618" width="23" height="18" fill="#00d400" stroke="none" />
        <path d="M79 1618v-6a8 8 0 0 1 15 0v5" />
        <circle cx="123" cy="1620" r="13.5" strokeWidth="3" />
        <circle cx="123" cy="1620" r="16.5" strokeWidth="4" strokeDasharray="8 4.96" />
        <path d="M123 1615l5 5-5 5-5-5z" strokeWidth="3" />
        <path strokeWidth="3" d="M241 1671l4-2 5-18 5 30 6-14 4 12 4-7h5l7 3M265 1667h16" />
      </g>
      <g className="fill-[#00d400] font-['Liberation_Mono'] font-bold">
        <text transform="translate(105 1676) scale(0.68 1)" className="text-[33px]">TCG</text>
        <text x="241" y="1617" className="text-[24px]">V</text>
        <text x="265" y="1617" className="text-[24px]">W</text>
        <text x="243" y="1638" className="text-[24px]">S</text>
        <text x="262" y="1664" className="text-[23px]">1</text>
      </g>
    </svg>
  );
}

const actions = [
  { lines: ['Open'], more: true },
  { lines: ['Save As'], more: true },
  { lines: ['New'], more: false },
  { lines: ['Load', 'Law File'], more: true },
];

function ActionBar() {
  return (
    <div className="mt-[5px] flex h-[163px] w-[1173px]">
      {actions.map(({ lines, more }) => (
        <div
          key={lines[0]}
          className="relative flex flex-1 flex-col items-center justify-center border-t-6 border-r-3 border-b-3 border-l-6 border-t-[#3f86b6] border-r-[#1a5a86] border-b-[#1a5a86] border-l-[#4189b8] bg-[#2272a4] pr-[5px] pb-[8px] text-[37.5px] leading-[53px] font-bold text-[#4d5a68]"
        >
          {lines.map((line) => (
            <span key={line}>{line}</span>
          ))}
          {more && (
            <span className="absolute right-[21px] bottom-[18px] flex gap-[8px]">
              <i className="h-[9px] w-[8px] bg-[#4d5660]" />
              <i className="h-[9px] w-[8px] bg-[#4d5660]" />
              <i className="h-[9px] w-[8px] bg-[#4d5660]" />
            </span>
          )}
        </div>
      ))}
    </div>
  );
}

function DepthNote({ className, children }) {
  return (
    <div
      className={clsx(
        "absolute w-[473px] border-[3.5px] border-black bg-white pl-[57px] font-['Liberation_Serif'] text-[76px] leading-[91px] text-black",
        className
      )}
    >
      {children}
      <br />
      FBH
    </div>
  );
}

// Callouts placed over the scan
function Annotations() {
  return (
    <>
      <div className="absolute top-[49px] left-[899px] h-[175px] w-[767px] border-4 border-black bg-white pl-[69px] font-['Liberation_Serif'] text-[76px] leading-[148px] tracking-[0.3px] whitespace-nowrap text-black">
        5mm diameter FBH
      </div>
      <DepthNote className="top-[367px] left-[2713px] h-[310px] pt-[31px] tracking-[0.2px]">3mm depth</DepthNote>
      <DepthNote className="top-[975px] left-[2713px] h-[313px] pt-[35px] tracking-[0.2px]">6mm depth</DepthNote>
      <svg viewBox="0 0 3358 1758" className="pointer-events-none absolute inset-0 h-[1758px] w-[3358px]">
        <path d="M406 1141H777L939 1306L777 1467H406Z" fill="#fff" stroke="#000" strokeWidth="7" />
        <g fill="none" stroke="#ff0010" strokeWidth="16">
          <path d="M1664 132L2358 415" strokeWidth="12" />
          <ellipse cx="2441.5" cy="525.5" rx="85" ry="92" />
          <path d="M2553 306Q2620 308 2620 324V510Q2620 524 2640 525M2620 738V541Q2620 526 2640 525M2620 724V728Q2620 743 2553 745" />
          <path d="M2630 525H2686" strokeLinecap="round" />
          <path d="M2553 912Q2620 914 2620 930V1117Q2620 1130 2640 1131M2620 1338V1146Q2620 1132 2640 1131M2620 1330V1334Q2620 1349 2553 1351" />
          <path d="M2630 1131H2686" strokeLinecap="round" />
        </g>
        <path fill="#ff0010" d="M2396 431L2363 393L2347 435Z" />
      </svg>
      <div className="absolute top-[1179px] left-[463px] font-['Liberation_Serif'] text-[76px] leading-[92px] text-black">
        <span className="tracking-[-0.7px]">Machined</span>
        <br />
        slot depth
        <br />
        in mm
      </div>
      <div className="absolute top-[1288px] left-[986px] font-['Liberation_Serif'] text-[76px] leading-[92px] tracking-[0.3px] whitespace-nowrap text-black">
        2, 4, 6, 8, 6, 4, 2
      </div>
    </>
  );
}

export default function App() {
  return (
    <div className="relative h-[1758px] w-[3358px] overflow-hidden bg-white pt-[39px] pl-[52px] font-['Liberation_Sans']">
      <div className="flex h-[1662px] w-[3254px] flex-col bg-black">
        <Header />
        <Toolbar />
        <div className="flex flex-1">
          <Sidebar />
          <div className="flex flex-1 flex-col">
            <div className="h-[6px] bg-[#34515f]" />
            <div className="flex h-[1201px]">
              <div className="w-[23px]">
                <VerticalThumb fill="#6bff98" top={108} />
              </div>
              <IndexRuler />
              <CScan />
              <ColorBar />
              <DepthRuler />
              <div className="flex-1">
                <VerticalThumb fill="#ac5f9f" top={2} />
              </div>
            </div>
            <div className="flex h-[65px]">
              <div className="w-[66px] pl-[10px] text-[42px] leading-[58px] tracking-[-2px] text-white">A^</div>
              <ScanRuler />
            </div>
            <ActionBar />
          </div>
        </div>
      </div>
      <Annotations />
    </div>
  );
}
